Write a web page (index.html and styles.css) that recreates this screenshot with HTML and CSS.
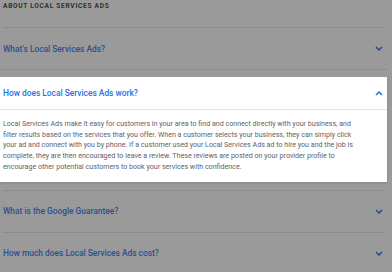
FILE: index.html
```html
<!DOCTYPE html>
<html>
<head>
<meta charset="utf-8">
<link rel="stylesheet" href="styles.css">
</head>
<body>
<div class="page">
  <div class="heading">ABOUT LOCAL SERVICES ADS</div>
  <div class="list">
    <div class="row">
      <span class="q">What’s Local Services Ads?</span>
      <svg class="chev" width="8" height="5" viewBox="0 0 8 5"><polyline points="1,1 4,4 7,1" fill="none" stroke="currentColor" stroke-width="1.5"/></svg>
    </div>
    <div class="open-wrap">
      <div class="card">
        <div class="card-head">
          <span class="q-open">How does Local Services Ads work?</span>
          <svg class="chev-open" width="8" height="5" viewBox="0 0 8 5"><polyline points="1,4 4,1 7,4" fill="none" stroke="currentColor" stroke-width="1.5"/></svg>
        </div>
        <p class="answer">Local Services Ads make it easy for customers in your area to find and connect directly with your business, and filter results based on the services that you offer. When a customer selects your business, they can simply click your ad and connect with you by phone. If a customer used your Local Services Ads ad to hire you and the job is complete, they are then encouraged to leave a review. These reviews are posted on your provider profile to encourage other potential customers to book your services with confidence.</p>
      </div>
    </div>
    <div class="row">
      <span class="q">What is the Google Guarantee?</span>
      <svg class="chev" width="8" height="5" viewBox="0 0 8 5"><polyline points="1,1 4,4 7,1" fill="none" stroke="currentColor" stroke-width="1.5"/></svg>
    </div>
    <div class="row">
      <span class="q">How much does Local Services Ads cost?</span>
      <svg class="chev" width="8" height="5" viewBox="0 0 8 5"><polyline points="1,1 4,4 7,1" fill="none" stroke="currentColor" stroke-width="1.5"/></svg>
    </div>
  </div>
</div>
</body>
</html>
```
FILE: styles.css
```css
html, body {
  margin: 0;
  padding: 0;
  background: #9a9a9a;
  overflow: hidden;
}
.page {
  width: 392px;
  height: 272px;
  font-family: Roboto, "Liberation Sans", sans-serif;
}
.heading {
  padding: 2px 0 0 3px;
  height: 9px;
  font-size: 6.6px;
  line-height: 9px;
  font-weight: 700;
  letter-spacing: 0.7px;
  color: #2f2f2f;
}
.list {
  margin: 16px 7px 0 3px;
}
.row {
  display: flex;
  align-items: center;
  justify-content: space-between;
  height: 41px;
  border-top: 1px solid #8c8c8c;
  padding-right: 2px;
}
.q {
  font-size: 8.4px;
  font-weight: 500;
  color: #2c4f92;
}
.chev {
  color: #26488c;
}
.open-wrap {
  border-top: 1px solid #8c8c8c;
  padding: 7px 0 8px;
  margin: 0 -2px 0 -3px;
}
.card {
  background: #ffffff;
  box-shadow: 0 1px 2px rgba(0,0,0,0.15);
}
.card-head {
  display: flex;
  align-items: center;
  justify-content: space-between;
  height: 32px;
  padding: 0 4px 0 3px;
  border-bottom: 1px solid #e3e3e3;
}
.q-open {
  font-size: 8.4px;
  font-weight: 500;
  color: #1a73e8;
}
.chev-open {
  color: #1a73e8;
}
.answer {
  margin: 0;
  padding: 9px 0 9px 3px;
  max-width: 362px;
  font-size: 7.1px;
  line-height: 10.7px;
  color: #5f6368;
}
```
